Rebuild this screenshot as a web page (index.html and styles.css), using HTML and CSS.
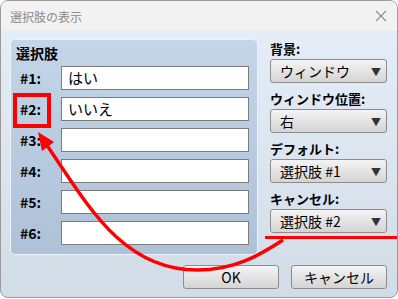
FILE: index.html
```html
<!DOCTYPE html>
<html>
<head>
  <title>選択肢の表示</title>
  <link rel="stylesheet" href="styles.css">
</head>
<body>
  <div class="window">
    <div class="titlebar">
      <span class="title">選択肢の表示</span>
      <svg class="close" width="12" height="12" viewBox="0 0 12 12">
        <path d="M1 1 L11 11 M11 1 L1 11" stroke="#8a8a8a" stroke-width="1.1" fill="none"/>
      </svg>
    </div>
    <div class="content">
      <div class="main">
        <div class="group">
          <div class="group-title">選択肢</div>
          <div class="row"><span class="label">#1:</span><div class="field">はい</div></div>
          <div class="row"><span class="label">#2:</span><div class="field">いいえ</div></div>
          <div class="row"><span class="label">#3:</span><div class="field"></div></div>
          <div class="row"><span class="label">#4:</span><div class="field"></div></div>
          <div class="row"><span class="label">#5:</span><div class="field"></div></div>
          <div class="row"><span class="label">#6:</span><div class="field"></div></div>
        </div>
        <div class="side">
          <div class="side-label">背景:</div>
          <div class="select"><span>ウィンドウ</span><span class="arrow">▼</span></div>
          <div class="side-label">ウィンドウ位置:</div>
          <div class="select"><span>右</span><span class="arrow">▼</span></div>
          <div class="side-label">デフォルト:</div>
          <div class="select"><span>選択肢 #1</span><span class="arrow">▼</span></div>
          <div class="side-label">キャンセル:</div>
          <div class="select"><span>選択肢 #2</span><span class="arrow">▼</span></div>
        </div>
      </div>
      <div class="buttons">
        <div class="button">OK</div>
        <div class="button">キャンセル</div>
      </div>
    </div>

    <!-- annotation marks drawn over the dialog -->
    <div class="mark-box"></div>
    <div class="mark-line"></div>
    <svg class="mark-arrow" width="398" height="299" viewBox="0 0 398 299">
      <path d="M283 240 C260 255 235 270 197 270 C120 270 85 200 44 141" stroke="#ff0000" stroke-width="3.5" fill="none"/>
      <polygon points="38,132 54,142 42,151" fill="#ff0000"/>
    </svg>
  </div>
</body>
</html>
```

FILE: styles.css
```css
body {
  margin: 0;
  font-family: "Noto Sans CJK JP", "Noto Sans", sans-serif;
  background: #ffffff;
}

.window {
  position: relative;
  width: 396px;
  height: 296px;
  border: 1px solid #9a9a9a;
  border-radius: 8px;
  overflow: hidden;
  background: linear-gradient(#e6eef9, #d2dce7);
}

.titlebar {
  height: 30px;
  display: flex;
  align-items: center;
  justify-content: space-between;
  padding: 0 10px 0 9px;
  background: #f2f2f2;
}

.title {
  font-size: 12px;
  color: #8a8a8a;
}

.content {
  padding: 8px 9px 0 9px;
}

.main {
  display: flex;
  gap: 12px;
}

.group {
  width: 246px;
  height: 214px;
  border: 1px solid #eef3f9;
  border-radius: 5px;
  background: linear-gradient(#c4d5e8, #adc1d7);
}

.group-title {
  font-size: 14px;
  font-weight: bold;
  line-height: 14px;
  padding: 6px 0 0 5px;
  height: 20px;
}

.row {
  display: flex;
  align-items: center;
  height: 24px;
  margin-bottom: 7px;
}

.label {
  width: 50px;
  padding-left: 9px;
  font-size: 14px;
  font-weight: bold;
  box-sizing: border-box;
}

.field {
  width: 188px;
  height: 24px;
  box-sizing: border-box;
  border: 1px solid #7c7c7c;
  background: #ffffff;
  font-size: 15px;
  line-height: 22px;
  padding-left: 6px;
}

.side {
  width: 117px;
}

.side-label {
  height: 20px;
  line-height: 20px;
  font-size: 13px;
  font-weight: bold;
}

.select {
  height: 24px;
  box-sizing: border-box;
  border: 1px solid #8c8c8c;
  border-radius: 3px;
  background: linear-gradient(#f4f4f4, #d4d4d4);
  display: flex;
  justify-content: space-between;
  align-items: center;
  padding: 0 5px 0 9px;
  font-size: 14px;
  margin-bottom: 6px;
}

.arrow {
  font-size: 10px;
  color: #333333;
}

.buttons {
  display: flex;
  justify-content: flex-end;
  gap: 12px;
  padding-top: 10px;
  padding-right: 1px;
}

.button {
  width: 96px;
  height: 24px;
  box-sizing: border-box;
  border: 1px solid #8c8c8c;
  border-radius: 3px;
  background: linear-gradient(#f4f4f4, #d4d4d4);
  text-align: center;
  font-size: 14px;
  line-height: 22px;
}

.mark-box {
  position: absolute;
  left: 12px;
  top: 92px;
  width: 30px;
  height: 27px;
  border: 4px solid #ff0000;
}

.mark-line {
  position: absolute;
  left: 264px;
  top: 235px;
  width: 132px;
  height: 3px;
  background: #ff0000;
}

.mark-arrow {
  position: absolute;
  left: -1px;
  top: -1px;
}
```
